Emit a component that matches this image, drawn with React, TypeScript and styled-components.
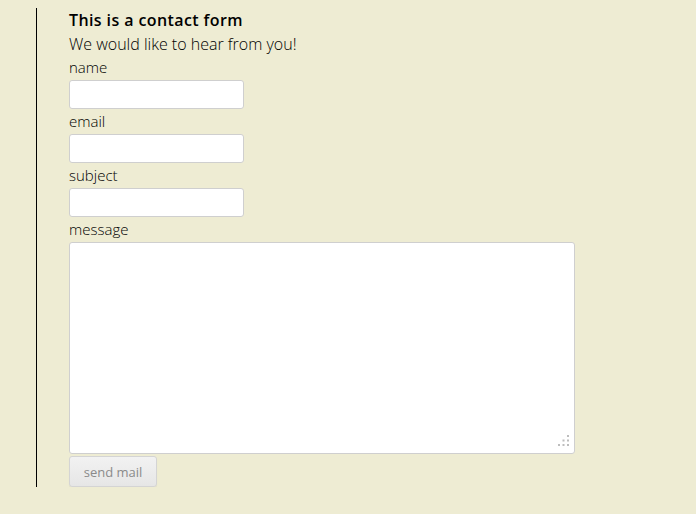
import React from 'react';
import styled, { createGlobalStyle } from 'styled-components';

const GlobalStyle = createGlobalStyle`
  html, body {
    background: #eeecd3;
  }
  body {
    margin: 8px;
    font-family: 'Open Sans', 'Noto Sans', sans-serif;
    color: #000;
  }
`;

const Page = styled.div`
  margin-left: 28px;
  border-left: 1px solid #000;
  padding-left: 32px;
  width: 520px;
`;

const Form = styled.form`
  display: flex;
  flex-direction: column;
  align-items: flex-start;
`;

const Title = styled.h3`
  margin: 2px 0 0;
  font-size: 16px;
  font-weight: 600;
  letter-spacing: 0.4px;
  line-height: 20px;
`;

const Intro = styled.p`
  margin: 4px 0 0;
  font-size: 16px;
  font-weight: 300;
  line-height: 20px;
`;

const Label = styled.label`
  margin: 3px 0 3px;
  font-size: 15px;
  font-weight: 300;
  line-height: 20px;
`;

const Field = styled.input`
  box-sizing: border-box;
  width: 175px;
  height: 29px;
  margin: 0 0 -1px;
  border: 1px solid #cfcfcf;
  border-radius: 3px;
  background: #fff;
  font: inherit;
  outline: none;
`;

const MessageBox = styled.div`
  position: relative;
  width: 506px;
  height: 212px;
`;

const Message = styled.textarea`
  display: block;
  box-sizing: border-box;
  width: 100%;
  height: 100%;
  margin: 0;
  border: 1px solid #cfcfcf;
  border-radius: 3px;
  background: #fff;
  font: inherit;
  outline: none;
  resize: none;
`;

const Grip = styled.svg`
  position: absolute;
  right: 6px;
  bottom: 8px;
  pointer-events: none;
`;

const Send = styled.button`
  box-sizing: border-box;
  margin-top: 2px;
  width: 88px;
  height: 31px;
  border: 1px solid #d4d4d4;
  border-radius: 3px;
  background: linear-gradient(#f2f2f2, #e6e6e6);
  box-shadow: 0 1px 1px rgba(0, 0, 0, 0.06);
  color: #8a8a8a;
  font-family: 'Open Sans', 'Noto Sans', sans-serif;
  font-size: 13px;
  font-weight: 400;
  cursor: pointer;
`;

const gripDots = [
  [9, 0],
  [4.5, 4.5],
  [9, 4.5],
  [0, 9],
  [4.5, 9],
  [9, 9],
];

const App: React.FC = () => {
  return (
    <>
      <GlobalStyle />
      <Page>
        <Form onSubmit={(e) => e.preventDefault()}>
          <Title>This is a contact form</Title>
          <Intro>We would like to hear from you!</Intro>
          <Label htmlFor="name">name</Label>
          <Field id="name" type="text" />
          <Label htmlFor="email">email</Label>
          <Field id="email" type="text" />
          <Label htmlFor="subject">subject</Label>
          <Field id="subject" type="text" />
          <Label htmlFor="message">message</Label>
          <MessageBox>
            <Message id="message" />
            <Grip width="11" height="11" viewBox="0 0 11 11">
              {gripDots.map(([x, y], i) => (
                <rect key={i} x={x} y={y} width="2" height="2" fill="#bdbdbd" />
              ))}
            </Grip>
          </MessageBox>
          <Send type="submit">send mail</Send>
        </Form>
      </Page>
    </>
  );
};

export default App;
